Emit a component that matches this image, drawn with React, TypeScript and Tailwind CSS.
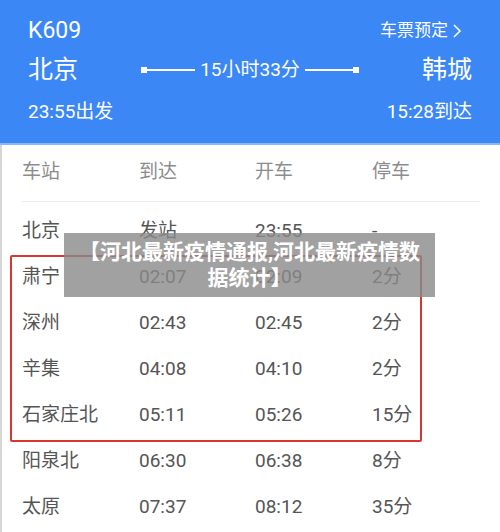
const rows = [
  { name: "北京", arr: "发站", dep: "23:55", stop: "-" },
  { name: "肃宁", arr: "02:07", dep: "02:09", stop: "2分" },
  { name: "深州", arr: "02:43", dep: "02:45", stop: "2分" },
  { name: "辛集", arr: "04:08", dep: "04:10", stop: "2分" },
  { name: "石家庄北", arr: "05:11", dep: "05:26", stop: "15分" },
  { name: "阳泉北", arr: "06:30", dep: "06:38", stop: "8分" },
  { name: "太原", arr: "07:37", dep: "08:12", stop: "35分" },
];

const App = () => {
  return (
    <div
      className="relative w-[500px] h-[532px] overflow-hidden bg-white"
      style={{ fontFamily: "Roboto, 'Noto Sans CJK SC', sans-serif" }}
    >
      {/* header */}
      <div className="h-[145px] bg-[#3b87f5] text-white px-[28px] pt-[15px] border-b-2 border-[#8ab8f7]">
        <div className="flex justify-between items-center h-[32px]">
          <span className="text-[23px]">K609</span>
          <span className="text-[17px] mr-[10px] flex items-center gap-[4px]">
            车票预定
            <svg width="10" height="16" viewBox="0 0 10 16" fill="none" stroke="white" strokeWidth="1.6">
              <path d="M2 2l6 6-6 6" />
            </svg>
          </span>
        </div>
        <div className="grid grid-cols-[1fr_auto_1fr] items-center h-[46px]">
          <span className="text-[25px]">北京</span>
          <div className="flex items-center">
            <span className="w-[6px] h-[6px] bg-white" />
            <span className="w-[48px] h-[1.5px] bg-white" />
            <span className="text-[19px] px-[5px]">15小时33分</span>
            <span className="w-[48px] h-[1.5px] bg-white" />
            <span className="w-[6px] h-[6px] bg-white" />
          </div>
          <span className="text-[25px] text-right">韩城</span>
        </div>
        <div className="flex justify-between items-center h-[40px] mt-[-1px]">
          <span className="text-[19px]">23:55出发</span>
          <span className="text-[19px]">15:28到达</span>
        </div>
      </div>

      {/* table */}
      <div className="border-l-2 border-[#d6d6d6] h-full px-[20px]">
        <div className="grid grid-cols-[117px_116px_117px_1fr] h-[57px] items-center pb-[2px] text-[19px] text-[#8c8c8c] border-b border-[#ebebeb]">
          <span>车站</span>
          <span>到达</span>
          <span>开车</span>
          <span>停车</span>
        </div>
        <div className="pt-[6px]">
          {rows.map((r) => (
            <div
              key={r.name}
              className="grid grid-cols-[117px_116px_117px_1fr] h-[46px] items-center text-[19px] text-[#555]"
            >
              <span>{r.name}</span>
              <span>{r.arr}</span>
              <span>{r.dep}</span>
              <span>{r.stop}</span>
            </div>
          ))}
        </div>
      </div>

      {/* red highlight box */}
      <div className="absolute left-[10px] top-[255px] w-[412px] h-[187px] border-[2.5px] border-[#d8372f] rounded-[2px]" />

      {/* watermark banner */}
      <div className="absolute left-[64px] top-[233px] w-[371px] h-[64px] bg-[#8a8a8a]/80 flex flex-col items-center justify-center text-white font-bold text-[21px] leading-[26px]">
        <span>【河北最新疫情通报,河北最新疫情数</span>
        <span>据统计】</span>
      </div>
    </div>
  );
};

export default App;
